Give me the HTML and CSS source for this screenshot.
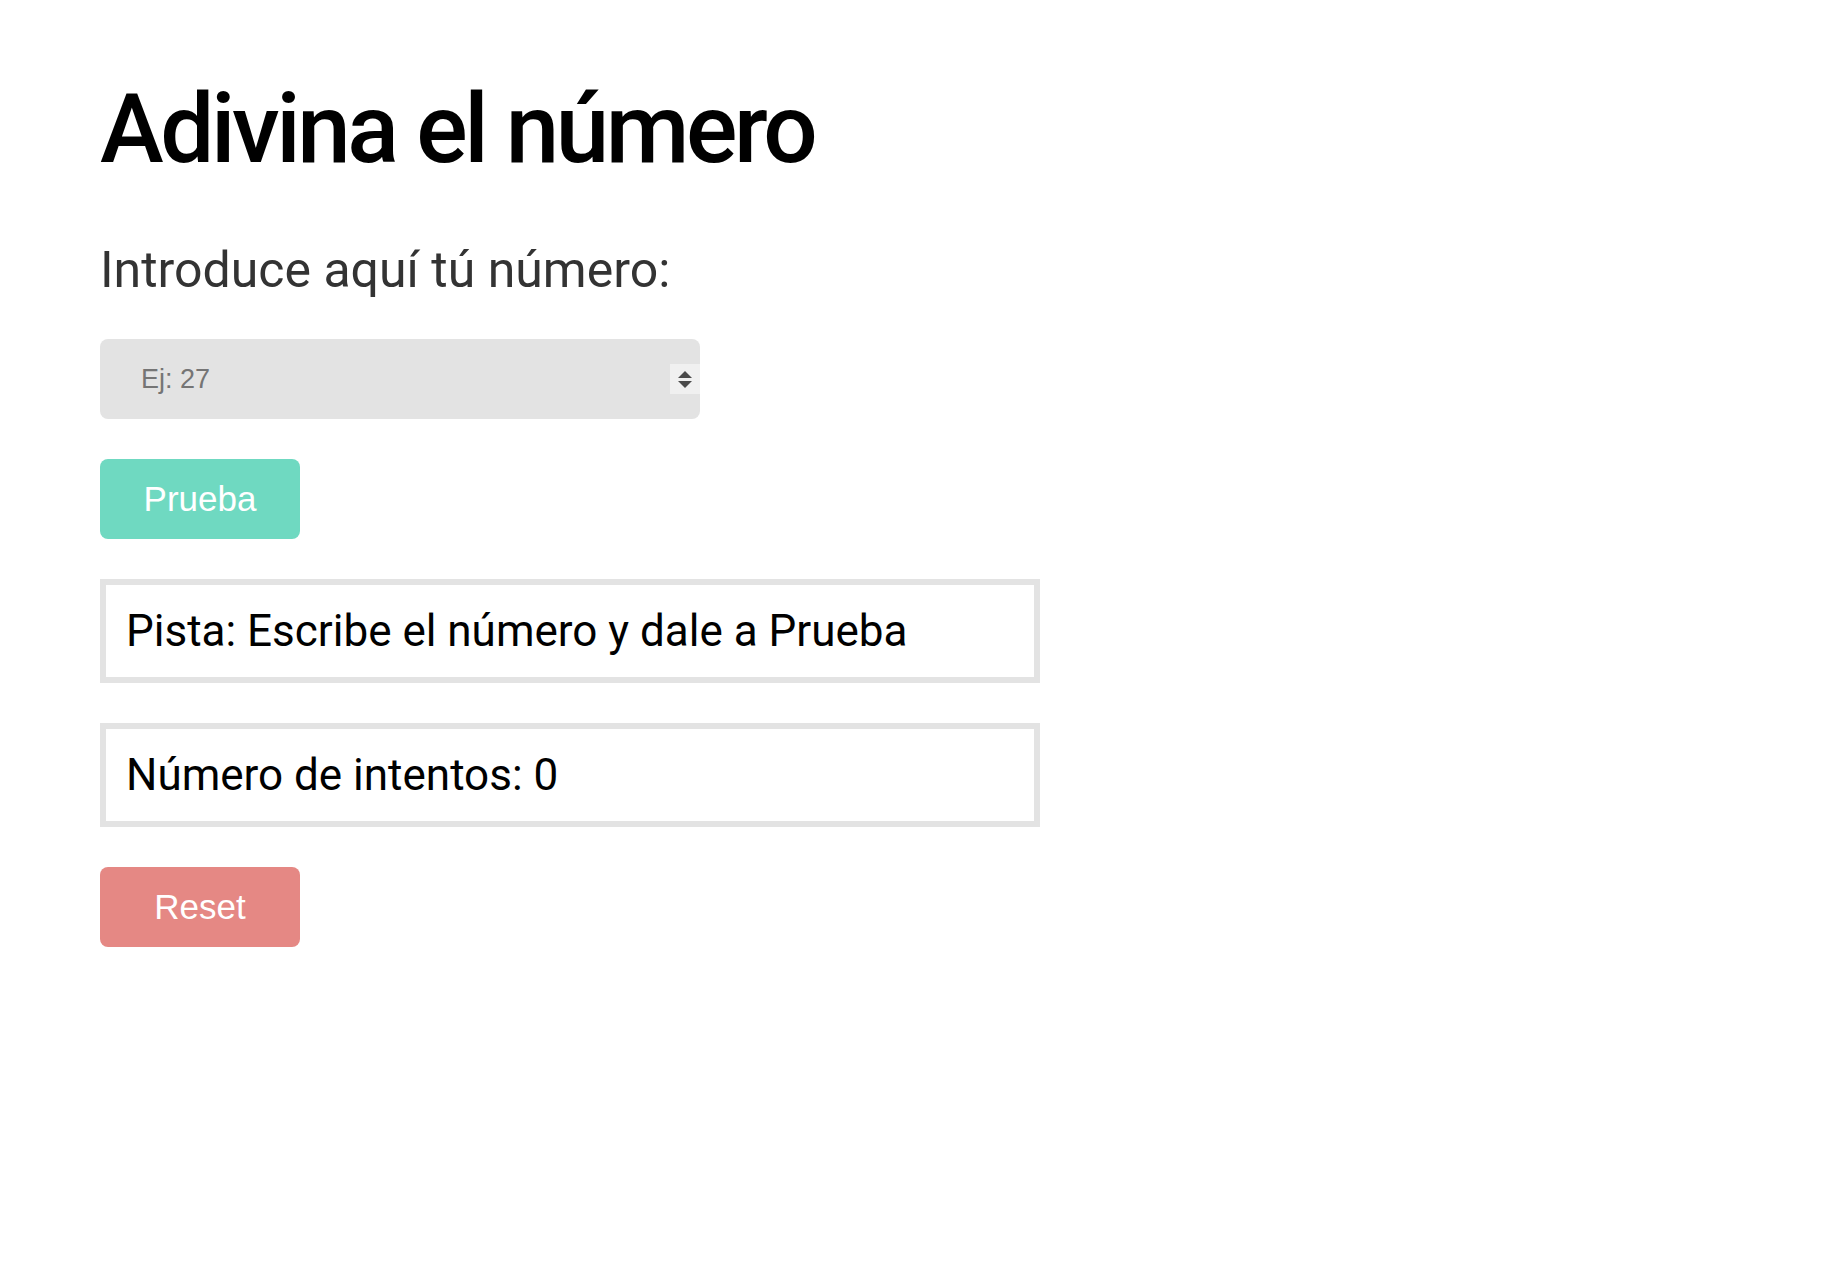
FILE: index.html
```html
<!DOCTYPE html>
<html lang="es">
<head>
<meta charset="utf-8">
<title>Adivina el número</title>
<link rel="stylesheet" href="styles.css">
</head>
<body>
<main class="game">
  <h1 class="title">Adivina el número</h1>
  <label class="label" for="guess">Introduce aquí tú número:</label>
  <div class="field">
    <input class="field-input" id="guess" type="text" placeholder="Ej: 27">
    <div class="spinner">
      <svg width="16" height="24" viewBox="0 0 16 24"><path d="M8 4 L15 11 L1 11 Z" fill="#4a4a4a"/><path d="M1 14 L15 14 L8 21 Z" fill="#4a4a4a"/></svg>
    </div>
  </div>
  <button class="btn btn-try" type="button">Prueba</button>
  <div class="box">Pista: Escribe el número y dale a Prueba</div>
  <div class="box">Número de intentos: 0</div>
  <button class="btn btn-reset" type="button">Reset</button>
</main>
</body>
</html>
```
FILE: styles.css
```css
html, body {
  margin: 0;
  background: #ffffff;
}
body {
  font-family: Roboto, "Liberation Sans", sans-serif;
}
.game {
  display: flex;
  flex-direction: column;
  align-items: flex-start;
  padding: 73px 100px;
}
.title {
  margin: 0;
  font-size: 96px;
  font-weight: 500;
  letter-spacing: -3.4px;
  line-height: 112px;
  color: #000;
}
.label {
  margin-top: 56px;
  font-size: 50px;
  line-height: 58px;
  color: #333333;
}
.field {
  margin-top: 40px;
  width: 600px;
  height: 80px;
  background: #e3e3e3;
  border-radius: 8px;
  display: flex;
  align-items: center;
  box-sizing: border-box;
}
.field-input {
  flex: 1;
  min-width: 0;
  height: 100%;
  border: none;
  background: transparent;
  outline: none;
  padding: 0 0 0 41px;
  font-family: "Liberation Sans", Arial, sans-serif;
  font-size: 27px;
  color: #333;
}
.field-input::placeholder {
  color: #757575;
}
.spinner {
  width: 30px;
  height: 30px;
  background: #f0f0f0;
  display: flex;
  align-items: center;
  justify-content: center;
}
.btn {
  margin-top: 40px;
  width: 200px;
  height: 80px;
  border: none;
  border-radius: 8px;
  color: #ffffff;
  font-family: "Liberation Sans", Arial, sans-serif;
  font-size: 35px;
  padding: 0;
}
.btn-try {
  background: #6fd9c1;
}
.btn-reset {
  background: #e58884;
}
.box {
  margin-top: 40px;
  width: 940px;
  height: 104px;
  box-sizing: border-box;
  border: 6px solid #e3e3e3;
  display: flex;
  align-items: center;
  padding-left: 20px;
  font-size: 44px;
  color: #000;
}
```
